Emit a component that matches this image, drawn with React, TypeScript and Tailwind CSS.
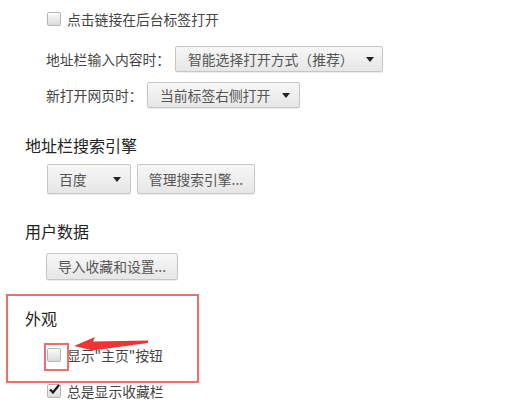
const Checkbox = ({ checked = false }: { checked?: boolean }) => (
  <span className="relative flex h-[14px] w-[14px] shrink-0 items-center justify-center rounded-[2px] border border-[#b4b4b4] bg-gradient-to-b from-[#fbfbfb] to-[#dcdcdc] shadow-[inset_0_1px_0_#fff]">
    {checked && (
      <svg width="11" height="10" viewBox="0 0 11 10" className="absolute -top-[1px] left-[1px]">
        <path d="M1 5.5 L4 8.5 L10 1" fill="none" stroke="#1a1a1a" strokeWidth="2.2" />
      </svg>
    )}
  </span>
);

const Caret = () => (
  <svg width="8" height="5" viewBox="0 0 8 5" className="shrink-0">
    <path d="M0 0 H8 L4 5 Z" fill="#222" />
  </svg>
);

const btn =
  "flex items-center rounded-[2px] border border-[#c6c6c6] bg-gradient-to-b from-[#f7f7f7] to-[#e6e6e6] text-[#555] shadow-[0_1px_1px_rgba(0,0,0,0.08)]";

export default function App() {
  return (
    <div
      className="relative h-[413px] w-[511px] overflow-hidden bg-white text-[13.8px] text-[#444]"
      style={{ fontFamily: '"Noto Sans CJK SC", "Noto Sans", sans-serif' }}
    >
      <div className="flex h-[38px] items-center gap-[6px] pl-[47px]">
        <Checkbox />
        <span>点击链接在后台标签打开</span>
      </div>

      <div className="mt-[8px] flex h-[26px] items-center pl-[46px]">
        <span className="w-[129px]">地址栏输入内容时：</span>
        <div className={`${btn} h-[26px] w-[208px] justify-between pl-[12px] pr-[8px]`}>
          <span>智能选择打开方式（推荐）</span>
          <Caret />
        </div>
      </div>

      <div className="mt-[10px] flex h-[26px] items-center pl-[46px]">
        <span className="w-[101px]">新打开网页时：</span>
        <div className={`${btn} h-[26px] w-[153px] justify-between pl-[12px] pr-[9px]`}>
          <span>当前标签右侧打开</span>
          <Caret />
        </div>
      </div>

      <div className="mt-[27px] flex h-[20px] items-center pl-[25px] text-[16px] text-[#222]">
        地址栏搜索引擎
      </div>

      <div className="mt-[9px] flex h-[30px] gap-[6px] pl-[47px]">
        <div className={`${btn} h-[30px] w-[84px] justify-between pl-[11px] pr-[9px]`}>
          <span>百度</span>
          <Caret />
        </div>
        <div className={`${btn} h-[30px] w-[118px] justify-center`}>管理搜索引擎...</div>
      </div>

      <div className="mt-[27px] flex h-[20px] items-center pl-[25px] text-[16px] text-[#222]">
        用户数据
      </div>

      <div className="mt-[12px] pl-[46px]">
        <div className={`${btn} h-[27px] w-[132px] justify-center`}>导入收藏和设置...</div>
      </div>

      <div className="ml-[6px] mt-[14px] h-[89px] w-[193px] border-2 border-[#f36b6b] pl-[17px] pt-[12px]">
        <div className="flex h-[20px] items-center text-[16px] text-[#222]">外观</div>
        <div className="ml-[22px] mt-[17px] flex h-[20px] items-center gap-[6px]">
          <Checkbox />
          <span>显示"主页"按钮</span>
        </div>
      </div>

      <div className="flex h-[16px] items-center gap-[6px] pl-[47px]">
        <Checkbox checked />
        <span>总是显示收藏栏</span>
      </div>

      {/* annotation overlays */}
      <div className="absolute left-[44px] top-[343px] h-[28px] w-[25px] border-2 border-[#f36b6b]" />
      <svg className="absolute left-0 top-0" width="511" height="413" viewBox="0 0 511 413">
        <path d="M74 346 L95 337 L93 341.5 L148 340.5 L148 343 L93 350.5 Z" fill="#ee3535" />
      </svg>
    </div>
  );
}
